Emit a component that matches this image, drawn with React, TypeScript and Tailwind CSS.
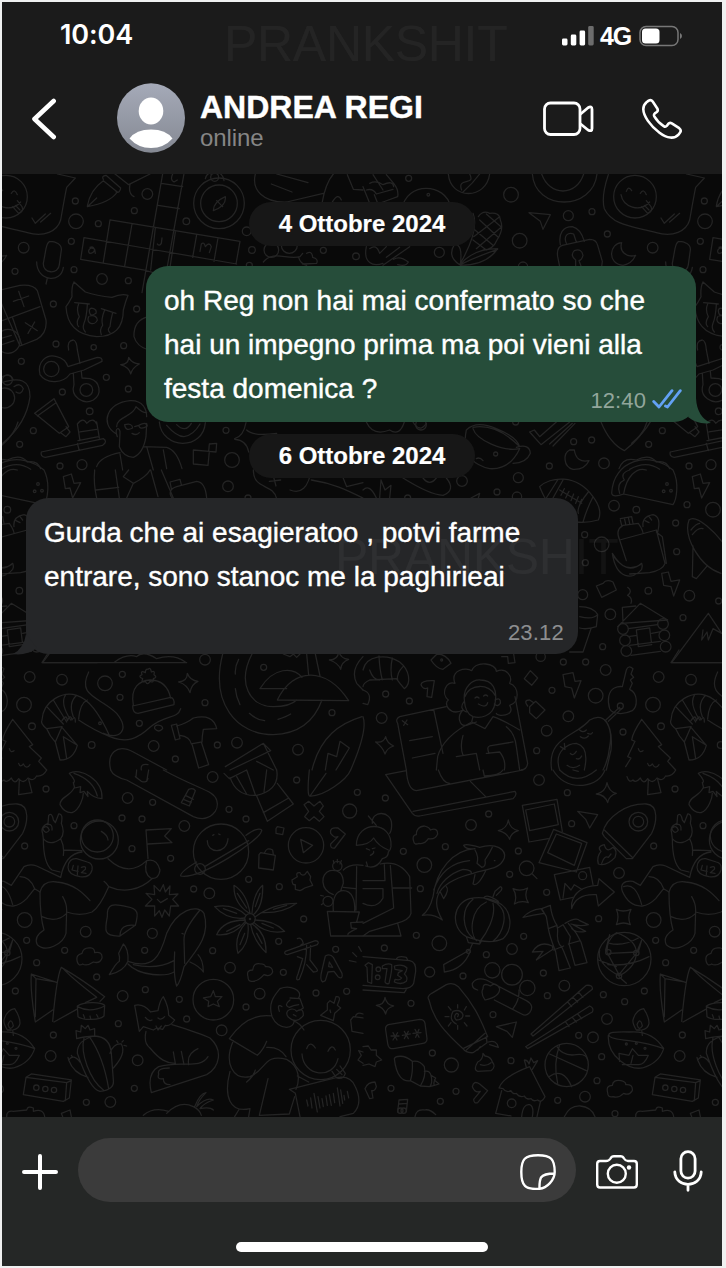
import React from "react";

type Panel = { x: number; y: number; d: string[]; c: number[][] };

/* Line doodles, drawn in units of a third of a pixel; each panel has its own origin. */
const PANELS: Panel[] = [
  {
    x: 0,
    y: 170,
    d: [
      // fountain pen
      "M262 108Q270 60 310 32L352 66Q330 98 262 110L290 84M310 28Q304 18 318 16L362 54Q360 70 348 66M330 0L386 44L450 12M390 44Q384 70 402 80",
      // crossword
      "M490 0L426 368M554 0L500 300M484 40L548 50M474 106L538 116M330 150L720 214L708 282M330 150L310 276M396 162L374 288M466 174L452 300M526 186L510 292M590 194L578 262M654 204L642 274M252 203L450 237L710 282M252 203L242 268L430 300M432 300L460 308",
      "M270 232Q284 226 286 250M284 238C270 226 260 246 270 250Q280 250 284 240M486 204L484 220Q478 230 472 222M600 244L604 222Q612 214 616 230Q628 214 634 230L628 248M520 8Q508 30 522 36L532 30",
      // compass
      "M640 122Q640 96 676 80Q680 108 640 122M650 92L668 110M616 26Q620 6 644 6Q668 6 672 32M632 12Q640 0 654 12",
      // cloud-like bubble
      "M766 12C754 60 790 98 860 96L970 70M814 42L876 66M830 12L924 38M966 100Q976 40 1000 12M1042 14L1060 58L1089 60M996 98Q1014 66 1024 90",
      // microphone
      "M150 214C166 214 186 222 184 240L178 284C176 314 128 312 130 280L138 236Q142 216 150 214M110 276C110 334 184 342 190 292M142 324L138 342",
      // tiles
      "M0 360L60 346Q100 342 112 362L138 450Q142 490 110 508L60 528L0 390M6 452L120 410M38 444L66 526M40 394L86 378M56 364L72 410M76 458L112 482M104 456L84 490M0 506L34 496M0 526L42 512",
      // crying cat
      "M222 336L256 366Q290 378 336 382Q364 370 384 376Q376 396 370 420Q370 500 290 500Q202 492 198 410Q206 400 216 380Q214 350 222 336M224 398L268 402M304 416L348 430M236 402Q228 420 238 440Q226 460 236 470M262 404Q260 440 252 460Q246 476 256 486M314 420Q302 450 308 466Q298 478 304 494M338 428Q332 450 330 470Q320 480 330 488M268 420C272 410 292 416 288 430Q268 444 268 420M266 440C256 460 284 470 292 450Q290 434 270 438",
      // scissors
      "M206 540Q200 512 220 510Q230 512 232 540L240 580M204 590L292 562Q308 562 306 574L252 600L210 612M210 612C190 640 140 644 120 614C110 576 140 550 170 560Q196 566 204 590M220 610L222 644C210 680 250 706 280 690C308 672 300 634 270 626L246 624L244 604",
      "M362 584Q386 584 386 562Q396 580 418 582Q398 592 392 612Q388 592 362 584",
      // snake head
      "M0 640Q90 606 90 680Q80 760 8 820M0 624Q30 604 40 630M42 650Q60 636 70 656Q64 676 48 666",
      // tube
      "M104 730L162 686L206 770L178 790L104 730M112 738L168 698M182 788L198 800L210 786L198 770",
      // cake
      "M232 762L240 812M290 756L298 804M234 812L296 800M232 762Q250 740 260 760Q280 740 290 762M124 846L310 806Q324 814 308 826L136 862Q120 860 124 846M232 820L238 842M240 786L290 778",
      // man in glasses
      "M346 790C300 760 320 700 390 692C430 690 440 720 440 740M350 770C350 740 400 740 408 710Q430 730 440 728M352 800C340 770 362 770 360 790L358 830Q370 860 400 862Q430 850 438 800L440 760M374 764Q396 758 398 774Q376 786 374 764M404 770L416 766Q440 754 442 768Q420 782 416 766M396 790Q410 798 418 788M290 890Q300 860 360 848M430 830L500 832Q530 840 546 896M440 830L460 900M360 852L368 900M490 840L500 896",
      "M478 756C486 840 610 842 616 758M500 766Q530 800 552 800Q580 796 600 762M530 764Q556 790 574 760M704 806Q730 800 738 758M704 808Q740 810 746 846M740 780Q760 800 830 790M580 840L628 844L624 886L580 882ZM628 822L650 820L648 846L626 844Z",
      "M790 276C820 240 860 270 900 260L908 250M896 262Q900 280 920 286M920 250Q936 240 938 262Q956 266 950 280L908 282",
      "M446 440Q400 450 402 500Q410 530 446 540",
    ],
    c: [[228,154,22],[226,93,9],[295,161,9],[442,72,16],[403,122,9],[559,154,10],[657,100,76],[657,100,55],[644,22,12],[740,184,13],[756,240,10],[814,240,22],[868,226,24],[970,241,9],[1068,259,10],[748,286,9],[71,233,16],[214,214,9],[45,304,9],[222,299,9],[306,327,16],[385,332,9],[160,402,9],[410,417,9],[168,522,9],[281,532,8],[371,527,9],[64,574,9],[154,597,23],[259,660,19],[319,622,9],[385,657,9],[187,666,9],[269,724,10],[100,782,9],[59,823,9],[246,884,15],[180,888,9],[696,870,22],[678,781,9],[22,630,15],[14,684,30],[24,514,36]],
  },
  {
    x: 363,
    y: 170,
    d: [
      "M0 50L20 100Q30 108 60 96L104 80Q108 60 92 40L70 14M20 40Q40 30 60 44Q90 30 92 50M10 60Q30 54 40 72L90 58M34 74L44 100M30 14L60 60",
      "M256 12C262 90 370 90 380 12M296 60C280 20 340 50 320 12M300 66Q330 40 350 12M508 12C516 124 690 124 702 12M536 12C560 80 640 80 662 12M116 120C130 30 250 40 262 110",
      // corn
      "M330 130Q350 180 290 284M346 140Q360 120 380 130Q410 126 412 150Q424 176 402 210Q390 240 360 240M350 150L404 200M370 132L414 170M336 180L390 226M330 210L370 240M410 140L332 200M416 170L340 236M292 284Q330 236 404 236Q370 286 292 286M292 284Q300 220 274 224Q252 260 290 284M292 284Q340 260 404 238",
      "M498 128L562 134L540 178L532 154Z",
      // padlock
      "M592 224C586 190 600 170 628 170C652 176 660 200 664 214M610 220C600 196 616 186 632 192L640 216M598 226L680 208Q700 208 704 226L718 274L716 290M598 226Q580 232 584 260L590 290M638 290L638 270Q620 256 634 242Q656 234 660 256Q656 270 648 272L654 288",
      "M776 218C740 220 730 280 780 286Q806 282 818 256C790 264 768 244 776 218",
      // speech bubble with smiley
      "M736 14Q714 80 724 116C750 170 820 170 880 188C930 202 970 184 980 150Q994 70 998 52L1024 24L970 12M774 74C780 110 830 130 860 96M790 64Q796 46 806 62M832 70Q842 54 850 74M836 110L854 130Q870 124 864 110L850 92M844 106L858 120M894 144L904 160L934 132M920 156L950 130",
      "M10 230C0 280 30 290 60 280M20 236Q40 220 50 250L70 230M70 262L110 232M92 268Q110 256 136 276Q130 290 104 284M140 230L60 286",
      // mug
      "M310 780Q340 750 400 776Q460 800 470 830M310 780C300 830 310 880 380 896Q440 900 470 836C420 846 340 810 330 776M460 832Q500 820 502 850Q490 880 450 880M330 772Q400 760 468 828M340 866Q350 860 360 872",
      "M500 786L514 780L530 800L580 756M500 786L534 824L620 756M560 822L628 760M570 828L636 760",
      "M714 756Q740 820 784 842Q840 800 852 756M620 840C600 850 600 890 630 898Q664 900 678 872Q640 880 634 840L620 840",
      "M768 896Q780 860 820 870Q860 850 880 876Q910 870 920 896M800 898Q850 870 890 898",
      "M10 756Q30 800 80 780Q110 800 124 756M150 756Q170 790 190 760",
    ],
    c: [[137,25,9],[444,74,22],[616,137,15],[687,125,9],[470,212,22],[733,192,9],[229,247,15],[816,80,64],[174,764,16],[458,756,9],[632,815,9],[686,810,9],[723,880,16],[559,888,9],[480,290,14],[398,852,6],[196,74,4]],
  },
  {
    x: 0,
    y: 470,
    d: [
      "M190 20L214 12L222 40L242 38L218 84L210 54L196 56ZM284 0Q280 40 290 84M346 0L358 84M288 60L356 52M386 0L370 20L400 40L380 84M400 40Q440 20 450 0M452 0L474 80M484 0L520 84M516 84Q500 60 530 50L590 34Q616 36 620 84M514 56L510 36L540 28L544 44",
      "M760 0C760 60 820 40 830 86M780 10Q900 30 910 0M820 18L828 48M808 34L842 30M870 60Q920 80 934 0M934 30C1000 40 1040 60 1089 84M1020 0L1040 50L1089 38M1030 22L1080 8",
      // mountain foot
      "M126 578L560 578M126 578L150 540M344 576Q380 550 410 560Q430 540 470 566Q520 550 556 576",
      // bobble hat
      "M400 706C390 650 420 632 450 630Q500 630 512 684M398 708L512 682Q524 684 522 704L414 730Q398 730 398 708M444 598Q452 590 454 606Q466 600 462 614Q474 622 460 626Q462 640 450 634Q442 648 436 634Q422 640 428 626Q412 620 426 614Q420 600 436 608Q436 596 444 598",
      "M536 636Q562 634 562 610Q570 632 594 634Q574 642 570 668Q562 644 536 636",
      "M988 570Q1014 570 1016 544Q1022 566 1046 568Q1024 576 1022 598Q1014 578 988 570",
      // shrimp
      "M126 750C130 690 190 664 230 676Q280 690 330 800Q280 780 236 750M126 750Q120 760 140 776L186 770M140 710L190 762M160 690L200 756M196 676Q180 700 212 750M230 676Q204 700 220 740M262 690Q240 700 236 746M140 776Q150 800 166 816L186 770M166 816L180 870Q220 870 232 826L190 800L200 866M232 826L186 772M186 752Q200 730 202 752Q212 730 216 750Q226 734 226 756M266 606C230 680 300 680 350 730C390 780 360 810 310 790C380 830 420 800 450 772C500 730 530 750 542 716M464 776C460 760 488 764 488 776Q476 790 464 776",
      // tree
      "M38 748Q10 790 8 810L18 814L-4 860L6 864L-10 890M38 748L98 824L88 830L124 864L116 874L140 900M28 836Q32 850 42 842M56 880Q60 894 70 882Q80 900 90 884",
      // hammer
      "M514 766L530 762L540 806L526 810ZM530 768Q560 760 580 744Q640 730 650 776L610 778Q606 800 606 816L574 822Q570 800 540 796M576 822L596 894L626 884L604 816",
      // skateboard top
      "M332 900C320 850 350 820 400 846L500 900M424 900Q420 880 444 884",
      // road loop and hills
      "M668 552C630 700 710 794 820 794Q930 790 966 690M756 552C710 640 750 710 820 710Q870 710 890 690M716 568Q704 590 706 612M706 656Q708 680 720 704M748 730Q770 750 794 752M834 748Q860 740 872 732M780 656C820 590 880 590 906 622M780 656L860 656M832 690C880 590 980 590 1046 692L832 690M850 552L870 560L880 552L890 562L900 552M920 552L926 616M946 552L960 618",
      // drum
      "M676 890L790 820L812 842L690 900M790 820L830 900M770 874L820 900",
      // feather
      "M936 900C960 800 1020 760 1086 740M976 900L984 850L1010 860L1020 814L1048 834L1008 900M1089 560Q1050 600 1070 640L1089 660",
      "M1089 740Q1104 780 1052 900",
    ],
    c: [[684,49,16],[744,84,9],[22,119,10],[58,362,10],[615,569,16],[89,621,16],[186,629,16],[315,640,22],[367,613,9],[360,682,9],[72,704,22],[96,769,10],[418,760,9],[615,698,9],[275,825,10],[461,828,16],[526,867,9],[652,825,9],[711,818,16],[894,839,16],[996,728,9],[791,592,9],[300,760,4]],
  },
  {
    x: 363,
    y: 470,
    d: [
      "M120 24Q200 74 240 76Q280 60 250 24M180 24Q200 50 220 24M0 60Q20 40 40 84M50 84L54 30L66 60L84 46L80 84M324 84L350 70L346 84",
      // football
      "M530 50C560 20 640 10 690 80Q720 120 706 150Q670 160 640 156M530 50Q540 74 546 84M584 30L550 84M600 30L570 84M690 80Q670 120 660 156M676 66Q640 110 646 130M590 60L656 100M604 56L594 76M618 64L608 84M632 72L624 92M646 80L638 100M656 88L650 104",
      // taco
      "M746 70C750 -30 860 -60 930 0C950 40 940 90 930 104L782 72Q750 84 746 70M782 72C790 20 820 -10 850 0M770 70Q760 40 784 30Q770 10 800 0",
      // food jar
      "M770 210L880 180L906 280Q900 300 860 308L800 312M770 210L790 272M770 210Q756 180 780 166L826 160Q840 180 840 190M772 150L776 166M772 146L806 140L810 160M784 144L788 162M796 142L800 160M840 170Q836 140 870 134Q896 140 884 186M846 152L858 158M858 140L866 150M748 250Q790 320 836 280Q840 290 836 298C810 330 760 330 748 250M754 262Q790 310 832 284M880 186L898 200L910 280",
      "M896 310L916 306L924 334L950 330L932 378L924 350L902 346Z",
      // surf board
      "M978 150C1000 130 1060 190 1089 230M978 150C960 200 1010 290 1074 310M990 228L988 320L1000 326L1034 286M984 180Q1000 160 1010 160M988 194Q1006 170 1020 176",
      "M700 348L720 340Q730 326 750 336L760 360L716 382ZM794 352Q810 364 794 376Q810 384 804 400M650 410Q690 410 704 434Q690 450 650 440M704 434L700 470Q670 480 650 474M684 476L660 546L620 546",
      // log cabin and mountain
      "M764 470L832 400L914 450L776 460M780 456L778 412L818 408M796 476L884 464M796 500L822 496M866 490L890 486M800 526L892 514M804 556L892 544M820 480L860 474L866 524L826 530ZM1036 430L926 578L1089 578M1036 430L1076 490M1020 480L1016 510L1032 486L1036 510L1050 476L1076 490",
      // croissant
      "M0 600C10 556 70 550 110 576C140 600 146 640 124 656Q110 640 100 626L20 630Q0 640 0 650M20 600Q30 630 50 630M48 558Q50 600 58 630M88 564Q80 600 88 630M120 590Q100 610 104 630M0 660Q30 670 14 704L0 700",
      "M204 570L222 552Q250 552 264 580L240 598Q220 596 204 570M416 560L434 560L436 580L456 578L452 552M174 644Q176 630 214 632L206 682L192 680L194 654Q180 660 174 644M484 626L502 602L524 624L506 646ZM600 614L630 608L636 634L654 632L634 684L626 654L606 650ZM500 710L518 694L546 720L520 746L500 728ZM494 708Q480 690 500 690L512 698",
      // reader with curly hair
      "M300 720C260 740 240 700 256 690C232 670 250 630 276 640C260 600 310 590 326 602C340 570 400 580 400 604C430 590 450 620 440 640C470 650 470 700 440 706C460 740 400 740 400 730M300 720C280 740 290 770 310 766L340 756M304 690C300 650 330 628 352 630C390 630 404 660 396 700C390 740 350 746 330 740Q306 730 304 690M306 680C320 640 380 640 396 676M396 690Q414 680 412 700Q404 712 394 702M302 696Q288 716 310 726M336 684Q342 678 348 684M362 678Q368 672 374 678M346 702Q370 716 374 698M330 740L326 756L366 776L390 740M326 756Q240 800 224 860L220 900M390 740Q420 750 470 780M300 796Q290 830 300 856M430 770Q456 790 460 830L470 900M280 860L340 850L350 900M378 850Q370 830 380 828L450 816M370 850L410 846Q430 870 424 900",
      "M104 760Q96 748 110 740L250 710M104 760L130 900M212 718L240 850M456 680L494 880Q492 898 474 900M118 752L134 764M132 750L122 766M140 812L208 800M148 864L216 850M38 816Q62 820 68 800Q72 820 92 828Q72 834 66 852Q60 832 38 816",
      // key
      "M778 650L790 600Q796 584 810 596L804 612L812 622L802 630L808 640L800 658C826 670 824 710 808 722C780 736 748 732 740 716C732 690 736 664 754 654Q766 648 778 650M770 712L726 752M776 716L736 754",
      // avocado baby
      "M566 900C550 800 640 800 680 750C730 720 750 780 740 830Q736 870 720 900M728 752Q750 780 744 840L730 900M590 900C570 840 620 820 640 820Q680 830 664 900M650 780Q660 790 670 780M652 800Q666 810 676 798M674 790Q684 796 688 788M622 850Q630 860 640 844M640 866Q650 870 656 858M612 886Q630 900 650 886M592 830L606 838L604 820",
    ],
    c: [[466,23,15],[402,66,9],[297,33,16],[134,84,9],[462,80,14],[753,107,16],[972,104,9],[1050,119,22],[938,159,9],[665,194,9],[716,223,22],[941,245,9],[667,278,9],[979,377,16],[1067,393,9],[659,374,15],[742,433,16],[960,443,9],[719,530,9],[780,477,16],[786,511,16],[790,543,16],[900,462,16],[904,496,16],[908,530,16],[601,576,9],[668,576,9],[728,600,16],[567,661,9],[698,677,22],[616,739,16],[68,672,9],[139,693,9],[56,744,16],[551,782,16],[780,786,9],[521,842,9],[772,708,9],[912,42,4],[902,64,4],[924,62,4],[533,560,14],[236,570,3]],
  },
  {
    x: 0,
    y: 770,
    d: [
      "M-6 20Q0 40 12 30Q20 40 34 24Q44 46 56 26Q70 44 84 24Q100 36 110 18Q130 20 140 0M58 30L56 74L96 68L86 28",
      // mushroom
      "M208 10C240 -10 310 30 306 86Q280 84 262 64L264 80L252 64L240 68L242 50L224 54L220 38Q230 34 208 10M222 54C210 80 180 80 180 104Q194 130 216 128C240 120 250 80 250 70M222 10Q280 30 292 78",
      // skateboard
      "M332 0Q340 20 380 30L580 140C630 160 660 120 650 90C640 60 600 60 490 0M406 20L424 34Q440 40 444 26M410 0L408 20M446 0L440 34M566 58L544 98L568 108L586 62Q580 52 566 58M556 76L580 88M550 88L574 98",
      // drum
      "M672 10L688 26L740 0M690 22Q710 80 770 76Q840 60 830 0M710 20L740 72M740 0L766 74M800 0L792 66M770 78L802 154L880 102L832 40M790 128L866 84",
      "M928 0Q920 80 930 78C970 80 1040 30 1052 0M930 78L978 10",
      "M912 104L926 94L942 108L960 94L970 108L958 124L972 140L958 154L942 140L928 152L914 140L926 124Z",
      "M828 176L832 170L852 174L848 194L828 190ZM902 208L938 226L910 248ZM992 190Q988 170 1014 174L1036 192L1004 234Q990 236 992 222L1014 200Q1004 206 992 190M777 254L782 248L826 256L820 300L776 294ZM794 248Q800 230 818 240L820 254",
      // planet
      "M738 196C770 170 790 176 784 184C780 210 600 330 542 318Q540 306 590 276M622 212C620 250 680 256 684 206M638 196L642 194M656 192L660 194M614 290L746 212",
      // astronaut
      "M128 190Q120 170 144 160L146 136Q156 126 160 150L166 158L176 132Q190 130 184 160Q196 190 182 206Q150 230 130 206ZM128 176Q140 162 148 180Q138 196 128 176M142 164Q158 160 156 180M130 206Q130 280 156 300L180 306M182 206Q194 230 190 256M190 240L246 242M182 322L110 288Q90 280 72 290L34 346M182 322C190 280 210 250 246 246M34 346L12 334M12 334Q-30 330 -20 364Q0 410 40 408Q60 406 80 386L104 356L120 366M104 356Q90 320 60 320M-16 350Q20 336 38 404",
      "M120 366Q130 330 170 336C220 340 250 370 270 392M120 366Q120 440 132 480Q100 500 112 524C140 550 190 520 198 490L200 420Q200 400 188 380M126 440Q170 460 200 430M200 426Q240 440 276 426Q300 410 326 350Q320 340 312 334M326 350C370 370 420 360 456 326M324 266C360 300 400 310 440 272M204 292Q206 264 230 266L262 276Q280 280 276 300Q270 324 240 320Q204 314 204 292M220 286L216 300L234 304M234 288L232 314M244 292Q260 286 256 298L244 308L258 310M440 272Q470 264 480 300Q476 330 452 324Q430 310 440 272M444 266L438 180L514 176L494 198L516 218L444 222M304 184Q324 196 324 210",
      // starburst
      "M438 370L464 374L462 346L480 364L490 344L496 366L510 348L508 374L534 372L518 388L536 408L512 408L508 438L494 420L486 442L478 422L464 438L464 408L436 408L456 388ZM472 388L482 398L502 386",
      // sticker
      "M322 440C320 400 340 400 380 410C416 416 416 430 406 466L360 498C310 500 314 480 322 440M360 498Q360 460 406 466",
      // whale
      "M328 614Q350 576 358 574Q360 560 356 550L370 522Q386 536 384 574C460 600 480 560 500 490C530 420 590 400 612 430C630 490 600 530 552 590M552 590Q540 640 530 648Q520 620 524 546M384 574Q370 606 328 614M384 582C420 620 500 620 522 606M400 584Q470 600 522 572M600 420Q550 480 552 510L554 580M570 576Q600 590 610 606Q610 570 594 554M546 490L550 492",
      // flower
      "M748 430Q700 400 702 346Q740 370 750 430M756 430Q760 370 788 346Q790 410 760 434M734 444Q680 450 644 410Q700 400 738 436M766 440Q820 400 890 400Q850 430 786 428M764 450Q820 450 854 484Q800 494 762 458M756 462Q800 490 798 548Q760 510 752 464M744 464Q750 520 714 550Q700 500 738 458M736 454Q700 500 650 494Q670 450 736 450M712 370L740 414M780 370L766 410M670 416L710 430M820 418L860 406M786 460L820 474M770 490L786 520M734 490L720 524M680 484L720 464",
      // puzzle
      "M876 330L892 320Q886 306 900 308Q904 318 914 314L922 304L932 320L930 330L938 346L914 354Q906 360 900 362L886 358L886 344Q876 346 876 330",
      // cacti in pots
      "M992 498L982 424L1078 426L1070 456M992 498L1089 498M1000 424C996 380 1010 362 1030 362C1056 362 1066 390 1064 424M1000 374C960 360 960 310 990 302Q1030 296 1030 340L1022 362M970 378L962 376M970 400L964 404M1000 272L1002 280M1012 268L1012 278M1024 272L1020 282M1030 300Q1050 280 1089 286M1070 290L1068 420M1030 352L1066 356M1089 456L1052 458L1054 474L1070 476Q1040 490 1044 494",
      // translation mark
      "M856 544L946 512Q960 514 952 524L862 554Q850 552 856 544M892 506Q904 500 910 520L902 526M920 526Q920 580 898 628Q884 634 894 612L908 566L892 560M932 526L930 570L950 596Q958 606 940 606L920 584M968 636Q958 630 966 600L976 558Q990 550 1000 562L1026 610Q1030 630 1014 620L1002 604L984 606L976 632ZM986 590L988 576L998 592ZM1048 572L1068 576M1058 548L1070 560M1076 530L1084 544",
      // clouds
      "M232 576Q226 554 246 550Q250 530 274 534Q284 536 284 548Q308 544 306 564Q300 582 280 576Q260 590 248 582Q236 590 232 576M744 620Q738 600 758 600Q760 576 784 582Q796 584 796 590Q818 588 818 606Q810 622 792 614Q774 634 758 634Q744 636 744 620",
      // pastry triangles
      "M158 754Q170 620 184 592Q250 630 314 680L300 694M230 718L162 756M158 720L106 756Q90 660 94 612L172 638M106 740L108 626L166 636M190 596Q210 620 290 682L256 698M94 612L108 626",
      "M232 708C250 696 300 694 314 706L312 738C300 750 250 752 234 740ZM232 710Q270 730 314 708M250 734L254 744M270 738L272 746M290 734L294 742",
      // fox
      "M404 706Q430 700 452 726L474 722Q480 690 490 680Q506 710 506 736L524 750Q510 770 496 766L488 778L470 774L460 780L430 770L418 784Q410 740 404 706M436 742Q446 756 456 750M474 744Q484 752 494 740M468 768L474 780L484 768M438 784Q430 820 450 834C480 870 500 880 524 880M516 764Q600 790 630 804C670 840 660 890 620 914L454 968Q440 910 476 890C540 870 600 900 624 860M508 894Q470 894 476 912Q470 930 490 926Q490 944 510 944M520 846L526 880M544 844L552 884M566 884Q560 850 594 836",
      // cactus
      "M230 806L228 782L242 786L244 766L256 776L264 766L270 780L284 776L284 798M230 806Q250 800 284 798M284 798Q330 800 334 850L340 930Q344 960 300 964Q270 960 232 850Q230 810 284 798M252 804C240 850 270 930 310 960M268 800Q310 860 326 956M330 850Q340 820 364 822Q380 850 340 894M264 922Q220 910 206 870Q220 850 240 876M206 870L204 862M218 862L214 856M372 826L380 828M354 818L350 812M366 816L370 812",
      // star ball
      "M640 662L646 680L666 680L652 694L658 710L640 702L624 710L626 694L610 684L632 680Z",
      // diya lamp
      "M34 780L22 780Q10 760 12 750Q20 720 44 716Q60 740 60 760Q58 776 38 780L40 796M24 764Q34 740 40 768Q30 784 24 764M-60 796Q-66 784 0 786Q70 780 104 836Q60 820 0 812Q-60 806 -60 796ZM-62 796C-66 860 0 900 40 894Q90 880 104 836M-28 874L-30 850L0 856L10 836L28 856L58 856Q46 884 30 884L-20 884M6 880L12 856",
      // chat box
      "M78 922L94 912L214 930L208 984L190 994L70 974ZM78 922L200 938L214 932M200 938L196 992",
      // friend hugging a smiley
      "M816 740C804 700 820 680 840 656C870 644 910 660 896 684M870 684L900 686L910 714L900 720M816 740Q830 770 860 772Q880 770 882 756M864 740C850 720 880 710 890 724Q910 710 910 736Q890 764 864 740M870 690Q850 706 868 712Q880 706 896 704M880 734L888 738M846 710Q830 700 838 724M816 738C760 730 720 760 688 806L772 856Q790 840 800 814M700 812C670 880 700 930 750 920C800 900 790 850 860 868C900 890 900 930 888 958M690 904C670 980 690 1030 750 1016M804 926L778 1036L868 1032L884 980M740 936Q760 920 766 900M880 752Q900 760 912 780M800 832Q840 830 858 860M750 1016L746 1040M716 1020L704 1040M892 918L926 936",
      "M920 836Q930 810 946 834M984 844Q996 820 1006 840M906 852C910 920 1000 930 1014 866M996 904L1010 924Q1030 930 1036 910L1020 888M1010 898L1026 914M868 958L996 926Q1050 910 1066 950Q1090 1000 1060 1030L1020 1040M868 958L886 970L900 1040M920 990L924 1008M932 984L936 1014M942 970L952 1026M954 980L960 1014M966 986L970 1010M978 978L982 1006M988 974L994 1006M1000 970L1004 998M1012 954L1020 1008M1022 960L1028 1000M1032 976L1034 990M1042 964L1046 984",
      "M982 700L990 692L1002 700L1008 680Q1020 678 1018 690L1012 706L1022 714L1004 730L1000 752L962 736L982 720ZM990 720L992 728",
      "M430 1036Q460 1010 506 1024M500 1030Q540 990 580 1010Q600 1020 604 1036M584 1010Q600 970 618 968Q596 990 590 1010Q620 980 640 990Q610 1000 600 1016Q630 1010 640 1020M20 1040Q20 1020 40 1024L80 1020Q84 1006 100 1014L100 1024Q130 1014 134 1040M184 1030L210 1020L214 1040M184 1030L188 1040",
      "M1052 750L1060 740L1089 744M1052 750L1056 784L1089 790M1066 740Q1070 724 1089 732M1076 842L1089 846M1076 842L1084 856L1074 870L1089 880",
    ],
    c: [[383,84,16],[458,97,9],[366,144,9],[426,147,9],[138,57,9],[222,167,9],[396,236,9],[512,265,9],[74,228,9],[553,168,16],[638,21,16],[687,118,9],[738,147,9],[890,30,9],[1049,123,21],[1072,67,9],[918,226,53],[663,245,83],[600,297,16],[746,328,9],[838,350,9],[581,357,9],[628,370,16],[74,450,22],[257,485,16],[80,511,9],[194,541,9],[110,578,9],[457,490,15],[434,541,9],[638,542,9],[750,447,16],[836,514,9],[911,447,9],[690,593,16],[850,607,9],[1007,538,9],[46,663,9],[290,621,9],[368,678,16],[436,659,9],[538,688,9],[560,747,9],[640,689,61],[738,711,9],[779,671,16],[948,669,9],[1040,664,9],[665,781,16],[355,761,9],[160,795,9],[152,858,16],[413,871,16],[403,955,9],[331,996,16],[259,997,9],[109,953,8],[136,957,8],[162,960,8],[962,840,89],[298,210,57],[292,198,48],[1012,288,14],[984,394,15],[22,820,3],[48,835,3],[-8,822,3],[750,447,2]],
  },
  {
    x: 363,
    y: 770,
    d: [
      // laptop base
      "M68 14L130 2M68 14L148 130Q156 140 170 138L450 86Q464 74 456 64L150 124M130 0Q134 60 160 62L480 0M226 0Q240 40 260 40M360 0L364 18Q410 16 420 0M322 34L368 80M570 0Q600 50 660 46Q710 40 726 0M590 0Q640 50 700 0M630 0L646 4",
      "M700 72Q728 66 732 38Q738 66 760 70Q738 76 734 98Q726 74 700 72M406 182Q432 176 436 150Q440 176 466 182Q444 188 440 208Q432 188 406 182M450 356Q472 366 494 354Q482 376 496 398Q474 390 454 402Q464 378 450 356M760 418Q780 428 804 418Q792 440 802 464Q782 454 760 464Q770 440 760 418M40 706Q64 704 66 682Q70 704 92 708Q70 714 68 732Q62 712 40 706",
      // gardener
      "M-20 226C-20 150 90 150 84 230Q82 242 76 246Q76 262 58 266Q40 300 8 288M-20 226Q20 224 32 204Q46 228 76 240M28 160C24 120 86 120 86 164Q86 182 80 190M16 138L40 166M10 236L20 240M28 236L36 234M22 256Q34 250 32 244M10 276L14 290M64 284L66 332L0 332M52 282Q110 270 140 320L144 430Q140 450 100 460L20 484L0 498L114 498L104 460M82 286L92 414L0 460M90 354L146 354M0 356L60 356L60 384Q40 420 0 400",
      "M152 214Q146 196 160 194Q160 170 184 168Q200 172 202 180Q224 172 224 192Q216 210 196 206Q184 224 168 220Q154 226 152 214",
      // orca
      "M178 436Q200 420 210 380C220 300 270 240 336 236Q310 240 302 226Q310 220 350 232C400 216 430 240 424 264C410 300 370 296 330 310C250 330 190 370 238 450Q210 430 178 436M212 360Q240 280 320 272M336 240Q348 260 342 280L356 292Q370 290 366 270Q380 250 388 232M336 314L330 342Q344 352 368 302M324 312Q330 300 300 298C260 310 230 340 222 370M232 366L242 386Q260 360 250 350M394 272L396 272",
      // lantern
      "M310 500C260 470 270 400 320 386Q360 376 404 396C450 420 450 480 420 506Q380 526 310 500M362 384Q370 370 404 392Q410 400 404 400ZM390 380L396 364L412 350Q420 352 414 362L400 376M330 388C290 420 300 480 330 504M370 396C320 420 320 490 340 512M390 400C400 440 370 490 350 516M404 402C440 430 420 490 390 514M310 500L316 518L350 522L356 512M328 522L320 540L242 584L244 606Q300 600 322 544",
      // photos
      "M478 106L582 88L598 184M478 106L498 216L556 206M488 120L574 102L586 164L500 182ZM572 178L672 218L640 306L528 278ZM580 192L656 220L634 286L554 248ZM574 314L680 292L690 344M574 314L592 390L630 382M600 384L606 340L624 360L634 344L656 358",
      "M644 124L704 134L680 174L668 148ZM626 416Q640 370 700 374L706 408L754 366L708 326L704 346Q636 350 626 400Z",
      // rocket
      "M718 190C730 140 790 100 850 102C890 106 880 160 866 190L808 266L790 266L724 200ZM724 180L810 264M724 224Q700 230 714 244Q700 260 706 282Q730 290 756 262Q764 240 750 232Q730 250 724 224M716 280Q724 256 736 262L744 252",
      "M508 312L522 326",
      // bamboo
      "M480 442Q500 420 534 416L544 430Q510 434 480 442M536 416L562 406L564 420Q570 450 582 466L584 480Q580 520 596 530L602 544L622 594L588 602L578 545Q560 500 556 476L550 440ZM556 476L582 466M572 540L602 528M584 474L600 464L622 500L618 522L636 586L672 578L654 516L640 490L616 460M616 522L652 512M606 460Q640 440 650 452L676 464Q650 470 624 462M630 464L668 484Q640 490 626 476M508 546Q530 510 568 528L570 538L520 570L540 544Z",
      // network globe
      "M740 494L728 540L768 614L820 550L836 510L826 546L738 550M710 540Q700 580 766 616M760 488Q730 510 732 546M760 488Q820 510 820 548Q820 590 768 618M740 520Q780 530 826 504M734 584Q800 590 858 560M790 640L768 620M706 570L760 590",
      // clock
      "M0 560L140 572Q160 576 158 604L152 640Q146 656 120 656L0 646M100 568Q104 556 130 562L134 570M0 660L124 668L130 658M6 586L16 578L28 584L26 640L14 636L12 592ZM58 588Q74 578 86 584Q88 600 78 640Q70 644 66 636L72 596L58 596ZM94 588Q120 580 132 594Q130 606 124 612Q136 622 130 634Q116 646 94 636L96 628Q112 632 116 624L104 616L106 608L118 602L96 598Z",
      "M68 780Q66 768 76 764L170 748Q184 748 186 760L192 806Q192 818 180 820L92 836Q76 838 74 820ZM84 798L108 798M90 788L102 810M104 788L90 810M118 796L142 792M124 784L136 806M136 784L124 806M150 790L174 788M156 778L168 802M168 778L158 802",
      // sunscreen
      "M198 690Q190 680 206 670L250 644Q270 636 286 650C330 700 350 740 374 800L300 836C250 790 210 750 198 690M300 836Q310 850 330 848L372 818L370 800M310 840L366 790M284 704L284 714M284 766L284 778M246 740L258 740M308 738L320 738M256 710L264 720M310 710L304 720M256 768L264 758M312 768L304 758M284 740Q290 730 280 730Q270 740 280 750Q300 750 300 734Q292 716 270 724Q256 750 280 762M376 816Q400 808 406 832L380 824M344 840L352 830",
      // hearts raft
      "M344 660Q326 656 328 640Q340 620 370 630L490 692Q516 706 500 728Q490 740 476 732L394 690M360 656Q360 636 382 648Q400 634 410 656Q410 680 366 690Q352 670 360 656M468 660Q470 690 450 716",
      // chopsticks
      "M504 792L670 646Q690 644 688 658L510 798ZM488 830L680 708Q694 714 688 726L494 836ZM614 696L626 710M630 682L644 696M646 666L660 682M608 756L618 770M628 742L640 756M644 732L656 746",
      "M400 770L460 756L448 802L432 784ZM0 830L16 828L24 840L40 840L40 856L56 870L40 876L36 890L18 882L0 886",
      // shell
      "M148 874C120 850 96 860 94 866C100 920 120 936 142 932Q150 910 148 874Q170 870 184 890Q190 920 172 948L142 932M184 904Q200 900 204 916Q210 940 200 950L172 948M204 916L218 924Q210 940 214 946L200 950M214 930L228 942L214 946",
      "M360 850Q360 870 344 876Q330 900 344 904L384 902Q400 890 388 876Q384 860 366 858L360 850M352 884Q370 890 384 878M328 950Q332 930 350 942L374 962L344 998Q332 1002 332 988L352 964Q336 970 328 950M6 956Q14 936 36 936L40 950Q36 964 26 962L30 984L20 986L6 956",
      // beach hut
      "M408 954Q420 920 500 890Q520 930 546 980Q536 1000 524 990Q510 996 504 986Q490 990 484 978Q470 984 460 970Q450 974 444 962Q430 970 420 956ZM490 892L484 870Q494 870 498 882L504 864L512 878L524 872L508 898M416 962L398 1030L444 1038M532 996L522 1040M476 1040Q480 1000 500 1004Q514 1010 508 1040",
      // basketball
      "M560 852L670 902M582 830Q600 860 640 854Q670 850 674 870M558 920Q600 890 626 950M584 940Q570 880 590 824",
      "M734 968Q728 946 748 946Q750 928 774 932Q790 936 788 944Q810 942 808 962Q798 978 782 970Q766 986 750 980Q734 984 734 968M108 990L134 988L130 1024M108 990L104 1026M108 1002L132 1000M156 1040Q160 1016 184 1020Q200 1016 218 1034M604 1040Q620 1006 652 1008Q684 1010 696 1040",
    ],
    c: [[67,84,9],[377,132,9],[324,165,16],[528,30,16],[613,68,9],[626,161,9],[121,244,9],[247,230,9],[466,243,9],[184,285,22],[440,313,9],[491,295,22],[768,309,16],[551,367,9],[659,317,12],[172,356,9],[707,446,9],[160,496,9],[482,499,9],[229,520,22],[64,534,9],[447,537,16],[370,554,9],[200,606,15],[300,618,9],[388,601,23],[447,614,31],[493,654,23],[541,609,9],[604,647,16],[553,677,9],[784,567,80],[736,547,8],[820,549,8],[768,618,8],[721,674,9],[785,695,9],[732,747,16],[647,796,9],[690,802,16],[716,860,9],[144,700,9],[390,734,9],[208,849,9],[265,885,21],[444,872,9],[611,885,65],[84,955,9],[279,964,9],[232,994,9],[702,932,9],[666,980,16],[584,991,9],[756,1031,9],[446,1000,13],[46,598,7],[44,622,7],[826,155,28],[826,155,16],[112,1022,8],[122,1022,8],[316,544,6]],
  },
];

function Doodles() {
  return (
    <g fill="none" stroke="#242424" strokeWidth="3.8" strokeLinecap="round" strokeLinejoin="round">
      {PANELS.map((p, i) => (
        <g key={i} transform={`translate(${p.x} ${p.y}) scale(0.33333)`}>
          {p.d.map((d, k) => (
            <path key={k} d={d} />
          ))}
          {p.c.map(([x, y, r], k) => (
            <circle key={k} cx={x} cy={y} r={r} />
          ))}
        </g>
      ))}
    </g>
  );
}

function Wallpaper() {
  return (
    <svg className="absolute inset-0 h-full w-full" viewBox="2 174 720 943" aria-hidden="true">
      <g transform="translate(-629 0)">
        <Doodles />
      </g>
      <Doodles />
      <g transform="translate(629 0)">
        <Doodles />
      </g>
    </svg>
  );
}

function Watermark({ className }: { className: string }) {
  return (
    <span
      className={`pointer-events-none absolute text-[50px] leading-[58px] tracking-[-0.3px] text-white/[0.045] ${className}`}
    >
      PRANKSHIT
    </span>
  );
}

function Header() {
  return (
    <header className="relative h-[172px] bg-[#1b1b1b]">
      <div className="flex h-16 items-center justify-between pl-[58px] pr-[39px]">
        <span className="pt-0.5 font-['Inter'] text-[27px] font-semibold tracking-[-0.1px]">10:04</span>
        <div className="flex items-center pt-[3px]">
          <svg width="34" height="22" viewBox="0 0 34 22" fill="#fff">
            <rect x="2" y="13.500" width="5.500" height="7" rx="1.400" />
            <rect x="10.800" y="9.500" width="5.500" height="11" rx="1.400" />
            <rect x="19.600" y="5.500" width="5.500" height="15" rx="1.400" />
            <rect x="28.200" y="1" width="5.500" height="19.500" rx="1.400" fill="#6d6d6d" />
          </svg>
          <span className="ml-1.5 text-[25px] font-bold leading-6 tracking-[-1.200px]">4G</span>
          <svg className="ml-2" width="44" height="22" viewBox="0 0 44 22">
            <rect x="1" y="1.500" width="38" height="19" rx="6" fill="none" stroke="#777" strokeWidth="1.500" />
            <rect x="3" y="3.500" width="17.500" height="15" rx="3.500" fill="#fff" />
            <path d="M41 8q2 1 2 3t-2 3z" fill="#777" />
          </svg>
        </div>
      </div>
      <div className="flex h-[104px] items-center pl-[29px] pr-[39px]">
        <svg className="mt-0.5" width="26" height="42" viewBox="0 0 26 42" fill="none" stroke="#fff" strokeWidth="4.600" strokeLinecap="round" strokeLinejoin="round">
          <path d="M22.700 3L3.500 21L22.700 39" />
        </svg>
        <svg className="ml-[60px]" width="69" height="70" viewBox="0 0 69 70">
          <defs>
            <linearGradient id="avatar" x1="0" y1="0" x2="0" y2="1">
              <stop offset="0" stopColor="#a5aab8" />
              <stop offset="1" stopColor="#858993" />
            </linearGradient>
          </defs>
          <ellipse cx="34" cy="35" rx="34" ry="34.700" fill="url(#avatar)" />
          <ellipse cx="34" cy="28" rx="12.300" ry="13.500" fill="#fff" />
          <path d="M12.500 55.500Q19 46.500 34 46.500T55.500 55.500Q47 65 34 65T12.500 55.500z" fill="#fff" />
        </svg>
        <div className="ml-[14px] flex flex-1 flex-col pt-[3px]">
          <h1 className="whitespace-nowrap text-[32px] font-bold leading-9 [-webkit-text-stroke:0.4px_white]">ANDREA REGI</h1>
          <span className="text-[24px] leading-[26px] tracking-[-0.1px] text-[#868686]">online</span>
        </div>
        <svg className="mt-0.5" width="52" height="36" viewBox="0 0 52 36" fill="none" stroke="#fff" strokeWidth="2.800" strokeLinejoin="round">
          <rect x="1.500" y="2" width="35.500" height="31.500" rx="6" />
          <path d="M37 13.500L45 6.800Q49 4.500 49 8.500V27.500Q49 31 45 29L37 22.500" />
        </svg>
        <svg className="ml-[46px] mt-0.5" width="42" height="42" viewBox="0 0 42 42" fill="none" stroke="#fff" strokeWidth="2.600" strokeLinecap="round" strokeLinejoin="round">
          <path d="M5.500 4.200L7.700 2.600Q10 1.200 11.700 3.500L16.300 10.500Q17.500 12.600 15.800 14L13.800 15.400Q12.500 16.600 13.300 18.300Q16.800 24.300 23 28.300Q24.700 29.200 25.900 27.700L27.200 25.900Q28.700 24.100 30.800 25.300L38.200 30.200Q40.600 32.200 39.200 34.300L37.800 36.400C33.500 41.300 26 40.500 18.500 34.700C9 27.700 2.500 18 2.300 11.300C2.300 8.300 3.500 5.900 5.500 4.200z" />
        </svg>
      </div>
      <Watermark className="left-[222px] top-[13px]" />
    </header>
  );
}

function DateChip({ children }: { children: React.ReactNode }) {
  return (
    <div className="flex h-11 w-[226px] items-center justify-center self-center rounded-[22px] bg-[#171717] text-[24px] font-bold [-webkit-text-stroke:0.2px_white]">
      {children}
    </div>
  );
}

function Chat() {
  return (
    <main className="relative h-[943px] overflow-hidden bg-[#090909]">
      <Wallpaper />
      <div className="relative flex flex-col pt-7">
        <DateChip>4 Ottobre 2024</DateChip>
        <div className="relative mr-[26px] mt-5 h-[156px] w-[550px] self-end rounded-[22px] bg-[#264d3a] px-[18px] pt-[13px] text-[28px] leading-[44px]">
          <p className="whitespace-nowrap [-webkit-text-stroke:0.4px_white]">
            oh Reg non hai mai confermato so che
            <br />
            hai un impegno prima ma poi vieni alla
            <br />
            festa domenica ?
          </p>
          <svg className="absolute -right-4 bottom-[-2px]" width="26" height="26" viewBox="0 0 26 26" fill="#264d3a">
            <path d="M10 0Q11 19 25 25Q12 27 2 19z" />
          </svg>
          <div className="absolute bottom-[7px] right-[14px] flex items-center gap-[6px] text-[22px] leading-[28px] tracking-[0.100px] text-[#92a69c]">
            12:40
            <svg className="-mt-1" width="30" height="20" viewBox="0 0 30 20" fill="none" stroke="#63a1f4" strokeWidth="2.800" strokeLinecap="round" strokeLinejoin="round">
              <path d="M1.700 12.500L7 18L20 1.700M13.500 17L15.500 18L28.300 1.700" />
            </svg>
          </div>
        </div>
        <div className="mt-3 flex flex-col">
          <DateChip>6 Ottobre 2024</DateChip>
        </div>
        <div className="relative ml-6 mt-5 h-[156px] w-[552px] rounded-[22px] bg-[#252628] px-[18px] pt-[13px] text-[28px] leading-[44px]">
          <p className="whitespace-nowrap [-webkit-text-stroke:0.4px_white]">
            Gurda che ai esagieratoo , potvi farme
            <br />
            entrare, sono stanoc me la paghirieai
          </p>
          <svg className="absolute -left-[13px] bottom-[-1px]" width="26" height="24" viewBox="0 0 26 24" fill="#252628">
            <path d="M13 3Q11 17 0 23Q13 25 24 17z" />
          </svg>
          <span className="absolute bottom-[7px] right-[14px] text-[22px] leading-[28px] tracking-[0.200px] text-[#8d8e90]">23.12</span>
        </div>
      </div>
      <Watermark className="left-[333px] top-[354px]" />
    </main>
  );
}

function Footer() {
  return (
    <footer className="flex h-[149px] flex-col items-center bg-[#252726]">
      <div className="flex w-full items-center pl-5 pr-[18px] pt-[21px]">
        <svg width="36" height="36" viewBox="0 0 36 36" stroke="#fff" strokeWidth="4" strokeLinecap="round" className="mt-1">
          <path d="M18 2V34M2 18H34" />
        </svg>
        <div className="ml-5 flex h-16 w-[498px] items-center justify-end rounded-full bg-[#3b3b3b] pr-5">
          <svg className="mt-1" width="36" height="36" viewBox="0 0 36 36" fill="none" stroke="#fff" strokeWidth="2.400" strokeLinecap="round" strokeLinejoin="round">
            <path d="M19.500 34.700C5 36 1.300 31.500 1.300 18C1.300 5 5 1.300 18 1.300C31 1.300 34.700 5 34.700 18C34.700 26 27 34 19.500 34.700Q19.300 27 21 23.500Q24 19.500 34.500 19.500" />
          </svg>
        </div>
        <svg className="ml-5 mt-1" width="42" height="34" viewBox="0 0 42 34" fill="none" stroke="#fff" strokeWidth="2.400" strokeLinejoin="round">
          <path d="M4 6H10Q13 6 14.500 3.500Q15.500 1.300 18 1.300H24.500Q27 1.300 28 3.500Q29.500 6 32 6H38Q40.800 6 40.800 8.800V29.500Q40.800 32.500 38 32.500H4Q1.200 32.500 1.200 29.500V8.800Q1.200 6 4 6z" />
          <circle cx="20.800" cy="18.800" r="9" />
          <circle cx="33" cy="12.500" r="2.200" fill="#fff" stroke="none" />
        </svg>
        <svg className="ml-[34.500px] mt-0.5" width="30" height="42" viewBox="0 0 30 42" fill="none" stroke="#fff" strokeWidth="2.800" strokeLinecap="round">
          <rect x="7.900" y="1.700" width="14.200" height="26.500" rx="7.100" />
          <path d="M1.800 22C2.500 38.500 27.500 38.500 28.200 22M15 34.500V40.300" />
        </svg>
      </div>
      <div className="mt-10 h-[10px] w-[252px] rounded-full bg-white" />
    </footer>
  );
}

export default function App() {
  return (
    <div className="h-[1268px] w-[726px] bg-[#eff0f0] pb-[2px] pl-[2px] pr-1 pt-[2px] font-['Liberation_Sans',Arial,sans-serif] text-white">
      <div className="overflow-hidden">
        <Header />
        <Chat />
        <Footer />
      </div>
    </div>
  );
}
